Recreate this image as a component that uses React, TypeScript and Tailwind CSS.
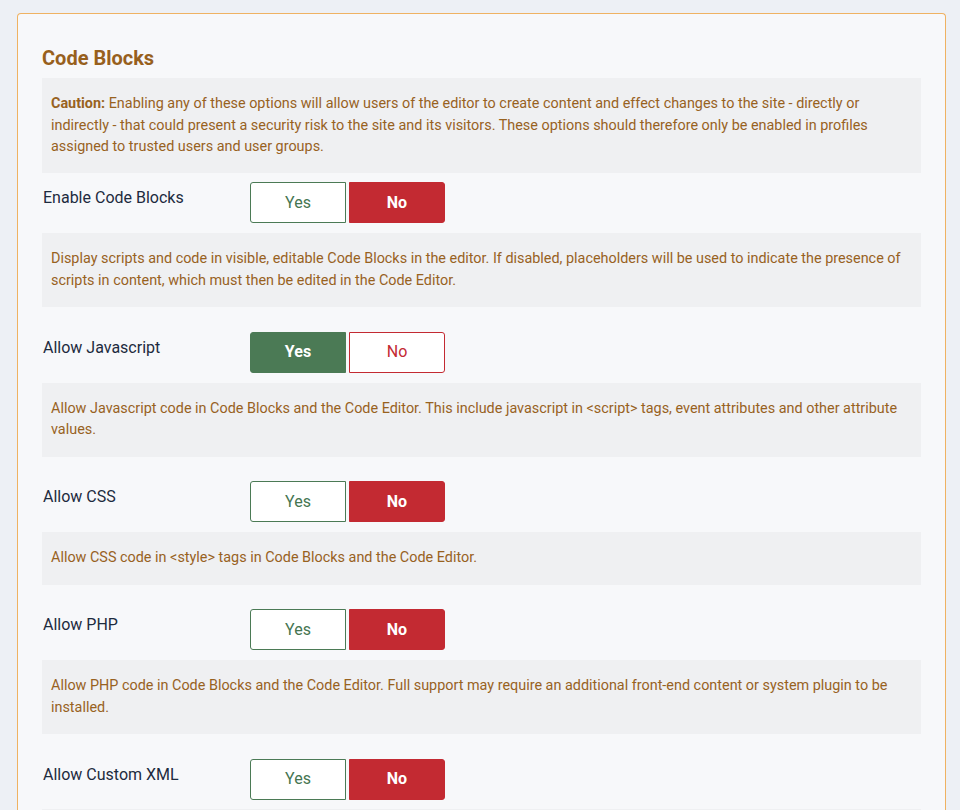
const font = { fontFamily: "Roboto, 'Liberation Sans', sans-serif" };

type Option = {
  label: string;
  value: boolean;
  description: string;
};

const options: Option[] = [
  {
    label: "Enable Code Blocks",
    value: false,
    description:
      "Display scripts and code in visible, editable Code Blocks in the editor. If disabled, placeholders will be used to indicate the presence of scripts in content, which must then be edited in the Code Editor.",
  },
  {
    label: "Allow Javascript",
    value: true,
    description:
      "Allow Javascript code in Code Blocks and the Code Editor. This include javascript in <script> tags, event attributes and other attribute values.",
  },
  {
    label: "Allow CSS",
    value: false,
    description: "Allow CSS code in <style> tags in Code Blocks and the Code Editor.",
  },
  {
    label: "Allow PHP",
    value: false,
    description:
      "Allow PHP code in Code Blocks and the Code Editor. Full support may require an additional front-end content or system plugin to be installed.",
  },
  {
    label: "Allow Custom XML",
    value: false,
    description: "",
  },
];

function Toggle({ value }: { value: boolean }) {
  return (
    <div className="flex gap-[3px]">
      <button
        type="button"
        className={`h-[41px] w-[96px] rounded-l-[3px] border text-[16px] ${
          value
            ? "border-[#4b7a55] bg-[#4b7a55] font-bold text-white"
            : "border-[#4b7a55] bg-white text-[#457551]"
        }`}
      >
        Yes
      </button>
      <button
        type="button"
        className={`h-[41px] w-[96px] rounded-r-[3px] border text-[16px] ${
          value
            ? "border-[#c32a32] bg-white text-[#c32a32]"
            : "border-[#c32a32] bg-[#c32a32] font-bold text-white"
        }`}
      >
        No
      </button>
    </div>
  );
}

export default function App() {
  return (
    <div className="min-h-[810px] bg-[#edf0f5] pl-[17px] pr-[14px] pt-[13px]" style={font}>
      <div className="rounded-t-[4px] border border-b-0 border-[#efb262] bg-[#f7f8fa] px-[24px] pb-4 pt-[30px]">
        <h2 className="text-[20px] font-bold leading-[28px] text-[#97601d]">Code Blocks</h2>
        <div className="mt-[6px] h-[95px] bg-[#eff0f2] px-[9px] pt-[15px] text-[14.4px] leading-[21.5px] text-[#98621f]">
          <strong>Caution:</strong> Enabling any of these options will allow users of the editor to create content and
          effect changes to the site - directly or indirectly - that could present a security risk to the site and its
          visitors. These options should therefore only be enabled in profiles assigned to trusted users and user groups.
        </div>

        {options.map((option, index) => (
          <div key={option.label} className={index === 0 ? "mt-[9px]" : "mt-[24.5px]"}>
            <div className="flex items-start">
              <label className="mt-[5px] w-[208px] pl-px text-[16px] leading-[22px] text-[#1d2b3e]">
                {option.label}
              </label>
              <Toggle value={option.value} />
            </div>
            {option.description ? (
              <div className="mt-[10px] bg-[#eff0f2] px-[9px] pb-[16px] pt-[15px] text-[14.4px] leading-[21.5px] text-[#98621f]">
                {option.description}
              </div>
            ) : (
              <div className="mt-[9px] h-[20px] bg-[#eff0f2]" />
            )}
          </div>
        ))}
      </div>
    </div>
  );
}
